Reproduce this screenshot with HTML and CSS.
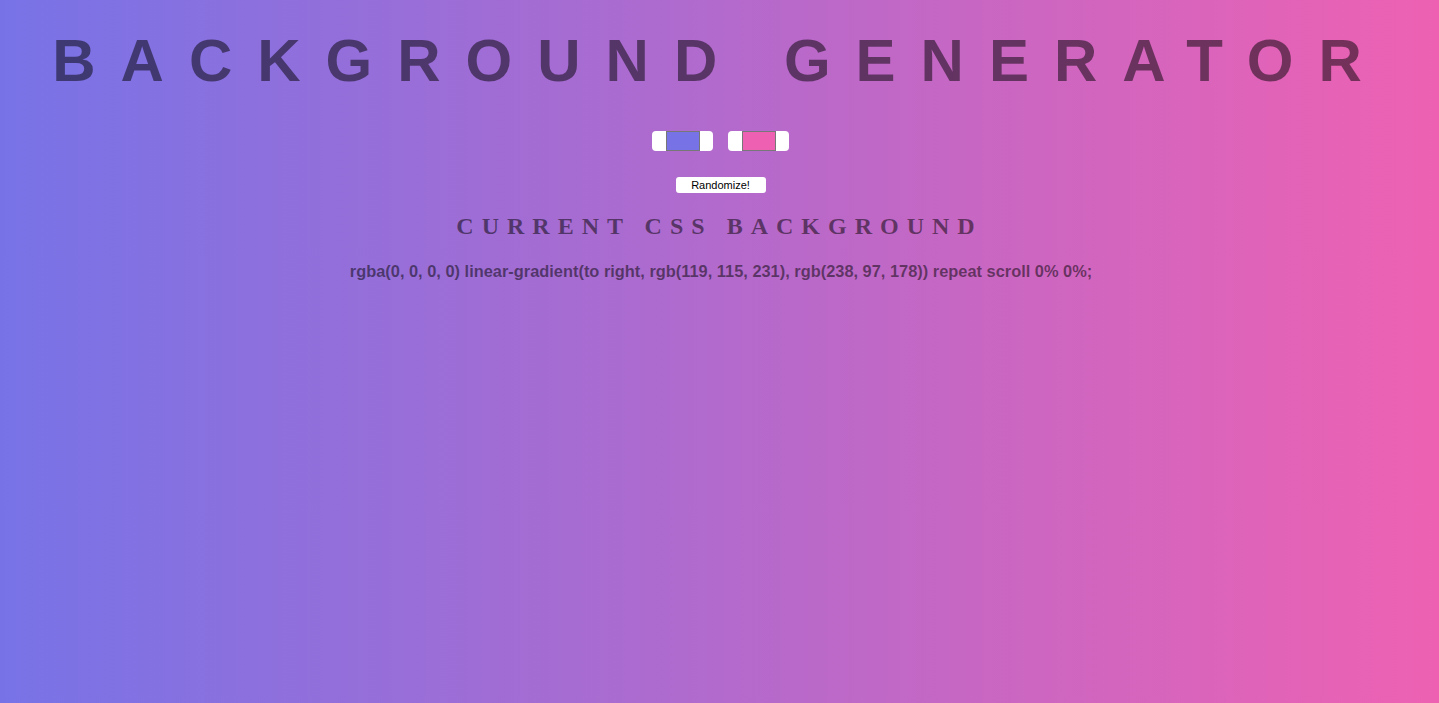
FILE: index.html
```html
<!DOCTYPE html>
<html lang="en">
<head>
<meta charset="utf-8">
<title>Background Generator</title>
<link rel="stylesheet" href="styles.css">
</head>
<body class="page">
  <h1 class="title">Background Generator</h1>
  <div class="controls">
    <input class="color" type="color" value="#7773e7">
    <input class="color" type="color" value="#ee61b2">
  </div>
  <div class="actions">
    <button class="random" type="button">Randomize!</button>
  </div>
  <h3 class="subtitle">Current CSS Background</h3>
  <p class="code">rgba(0, 0, 0, 0) linear-gradient(to right, rgb(119, 115, 231), rgb(238, 97, 178)) repeat scroll 0% 0%;</p>
</body>
</html>
```
FILE: styles.css
```css
html, body {
  margin: 0;
  padding: 0;
}

.page {
  min-height: 100vh;
  background: linear-gradient(to right, rgb(119, 115, 231), rgb(238, 97, 178));
  font-family: "Liberation Sans", Arial, sans-serif;
  text-align: center;
  color: rgba(0, 0, 0, 0.5);
}

.title {
  margin: 26px 0 0;
  font-family: "Liberation Sans", Arial, sans-serif;
  font-size: 60px;
  font-weight: 700;
  line-height: 69px;
  letter-spacing: 25px;
  text-transform: uppercase;
}

.controls {
  display: flex;
  justify-content: center;
  gap: 15px;
  margin-top: 36px;
  padding-left: 1px;
}

.color {
  -webkit-appearance: none;
  appearance: none;
  width: 61px;
  height: 20px;
  padding: 0;
  margin: 0;
  border: none;
  border-radius: 4px;
  background: #fff;
  cursor: pointer;
}

.color::-webkit-color-swatch-wrapper {
  padding: 0 13px 0 14px;
}

.color::-webkit-color-swatch {
  border: 1px solid #777;
  border-radius: 0;
}

.actions {
  display: flex;
  justify-content: center;
  margin-top: 26px;
  padding-left: 2px;
}

.random {
  width: 90px;
  height: 16px;
  padding: 0;
  border: none;
  border-radius: 3px;
  background: #fff;
  color: #000;
  font-family: "Liberation Sans", Arial, sans-serif;
  font-size: 11px;
  line-height: 16px;
}

.subtitle {
  margin: 19px 0 0;
  font-family: "Liberation Serif", "Times New Roman", serif;
  font-size: 24px;
  font-weight: 700;
  line-height: 28px;
  letter-spacing: 8px;
  text-transform: uppercase;
}

.code {
  margin: 22px 0 0;
  padding-left: 3px;
  font-size: 16.4px;
  font-weight: 700;
  line-height: 18px;
}
```
